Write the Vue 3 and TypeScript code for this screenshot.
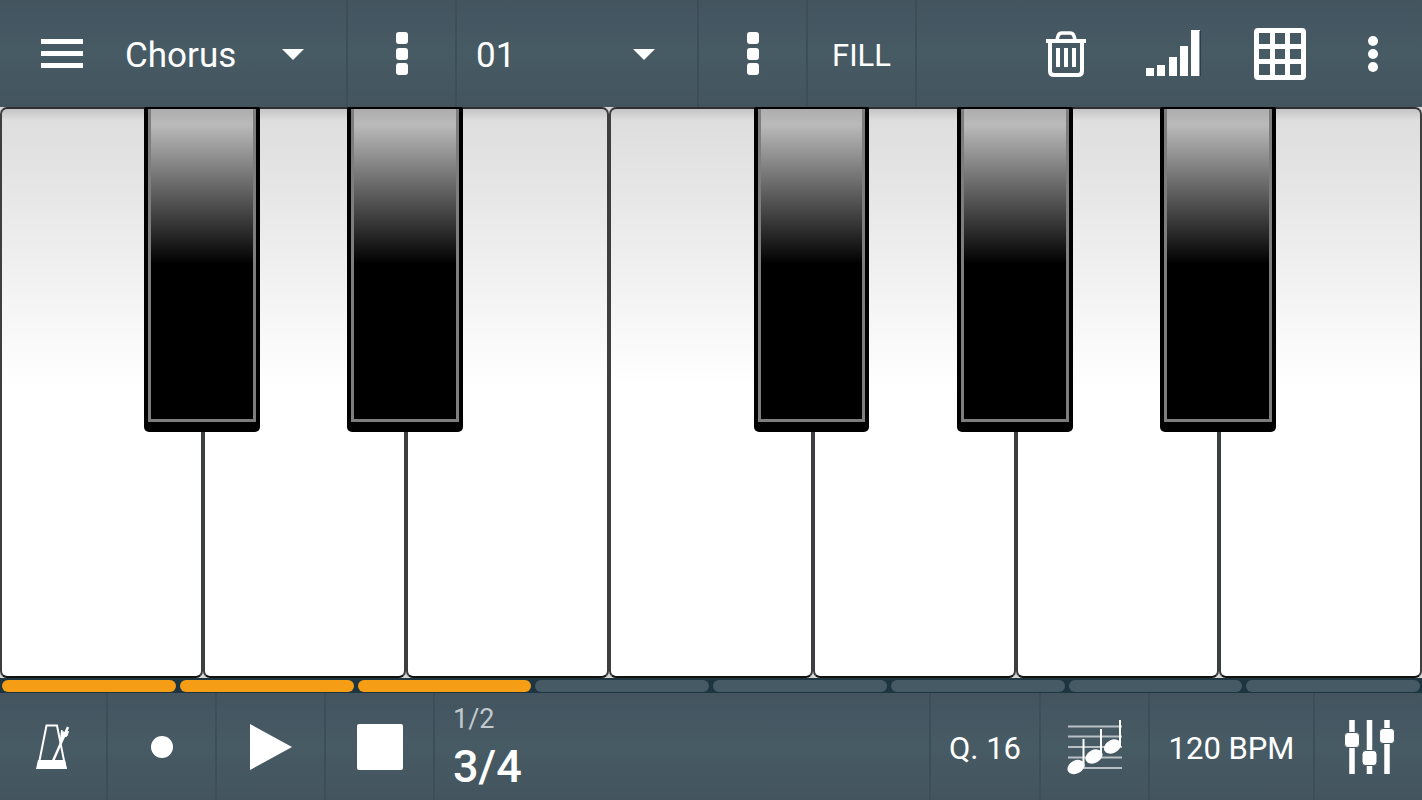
<script setup lang="ts">
import { ref } from 'vue'

interface PianoKey {
  note: string
  sharp?: string
}

const keys: PianoKey[] = [
  { note: 'C', sharp: 'C sharp' },
  { note: 'D', sharp: 'D sharp' },
  { note: 'E' },
  { note: 'F', sharp: 'F sharp' },
  { note: 'G', sharp: 'G sharp' },
  { note: 'A', sharp: 'A sharp' },
  { note: 'B' },
]

const totalSteps = 8
const currentStep = ref(3)
const section = ref('Chorus')
const pattern = ref('01')
</script>

<template>
  <div class="app">
    <header class="bar">
      <div class="cell section">
        <button class="menu" type="button" aria-label="Menu">
          <svg width="42" height="30" viewBox="0 0 42 30" fill="#fff">
            <rect width="42" height="5" /><rect y="12" width="42" height="5" /><rect y="24" width="42" height="5" />
          </svg>
        </button>
        <div class="picker">
          <select v-model="section" aria-label="Section">
            <option>Chorus</option>
          </select>
          <svg class="caret" width="22" height="12" viewBox="0 0 22 12"><path d="M0 1H22L11 12Z" fill="#fff" /></svg>
        </div>
      </div>
      <button class="cell" type="button" aria-label="Section options">
        <svg width="12" height="44" viewBox="0 0 12 44" fill="#fff">
          <rect width="12" height="12" rx="3" /><rect y="16" width="12" height="12" rx="3" /><rect y="31" width="12" height="12" rx="3" />
        </svg>
      </button>
      <div class="cell pattern">
        <div class="picker">
          <select v-model="pattern" aria-label="Pattern">
            <option>01</option>
          </select>
          <svg class="caret" width="22" height="12" viewBox="0 0 22 12"><path d="M0 1H22L11 12Z" fill="#fff" /></svg>
        </div>
      </div>
      <button class="cell" type="button" aria-label="Pattern options">
        <svg width="12" height="44" viewBox="0 0 12 44" fill="#fff">
          <rect width="12" height="12" rx="3" /><rect y="16" width="12" height="12" rx="3" /><rect y="31" width="12" height="12" rx="3" />
        </svg>
      </button>
      <button class="cell label" type="button">FILL</button>
      <div class="tools">
        <button class="tool" type="button" aria-label="Delete">
          <svg width="42" height="46" viewBox="0 0 42 46" fill="none" stroke="#fff">
            <path d="M1 10H41" stroke-width="4" />
            <path d="M12 9L13 5Q14 2 17 2H25Q28 2 29 5L30 9" stroke-width="3.5" />
            <path d="M5 11V40Q5 44 9 44H33Q37 44 37 40V11" stroke-width="4" />
            <path d="M13 17V36M21 17V36M29 17V36" stroke-width="4" />
          </svg>
        </button>
        <button class="tool" type="button" aria-label="Velocity">
          <svg width="56" height="48" viewBox="0 0 56 48" fill="#fff">
            <rect x="1" y="38" width="8" height="8" /><rect x="12" y="35" width="8" height="11" />
            <rect x="24" y="27" width="8" height="19" /><rect x="35" y="16" width="8" height="30" />
            <rect x="46" width="9" height="46" /><path d="M55 1V46" stroke="#10213f" stroke-width="1" />
          </svg>
        </button>
        <button class="tool" type="button" aria-label="Pads">
          <svg width="52" height="52" viewBox="0 0 52 52">
            <path
              fill="#fff"
              fill-rule="evenodd"
              d="M4 0H48Q52 0 52 4V48Q52 52 48 52H4Q0 52 0 48V4Q0 0 4 0ZM5 5V16H16V5ZM21 5V16H31V5ZM36 5V16H47V5ZM5 21V31H16V21ZM21 21V31H31V21ZM36 21V31H47V21ZM5 36V47H16V36ZM21 36V47H31V36ZM36 36V47H47V36Z"
            />
          </svg>
        </button>
        <button class="tool more" type="button" aria-label="More">
          <svg width="10" height="38" viewBox="0 0 10 38" fill="#fff">
            <circle cx="5" cy="6" r="5" /><circle cx="5" cy="19" r="5" /><circle cx="5" cy="32" r="5" />
          </svg>
        </button>
      </div>
    </header>

    <main class="keyboard">
      <div v-for="key in keys" :key="key.note" class="slot">
        <button class="white" type="button" :aria-label="key.note"></button>
        <button v-if="key.sharp" class="black" type="button" :aria-label="key.sharp"><span class="face"></span></button>
      </div>
    </main>

    <div class="steps">
      <span v-for="n in totalSteps" :key="n" class="step" :class="{ on: n <= currentStep }"></span>
    </div>

    <footer class="bar">
      <button class="cell" type="button" aria-label="Metronome">
        <svg width="36" height="56" viewBox="0 0 36 56" fill="none" stroke="#fff">
          <path d="M11.5 6.5H22L30.5 49H3Z" stroke-width="2" />
          <path d="M3 41H30L32 50H1Z" fill="#fff" stroke="none" />
          <path d="M18 42L33 8" stroke-width="2.5" />
          <path d="M26.5 11L29 13.5L33.5 12.5L32 17L29.5 18L25.5 21Z" fill="#fff" stroke-width="1" />
        </svg>
      </button>
      <button class="cell" type="button" aria-label="Record">
        <svg width="24" height="24" viewBox="0 0 24 24"><circle cx="12" cy="12" r="11" fill="#fff" /></svg>
      </button>
      <button class="cell" type="button" aria-label="Play">
        <svg width="42" height="46" viewBox="0 0 42 46"><path d="M0 0L42 23L0 46Z" fill="#fff" /></svg>
      </button>
      <button class="cell" type="button" aria-label="Stop">
        <svg width="46" height="46" viewBox="0 0 46 46"><rect width="46" height="46" rx="2" fill="#fff" /></svg>
      </button>
      <div class="cell position">
        <span class="measure">1/2</span>
        <strong class="beat">3/4</strong>
      </div>
      <button class="cell label quantize" type="button">Q. 16</button>
      <button class="cell" type="button" aria-label="Notes">
        <svg width="56" height="56" viewBox="0 0 56 56">
          <path d="M1 7.5H55M1 17.5H55M1 28H55M1 38.500H55M1 49H55" stroke="#b9c0c5" stroke-width="1.8" />
          <path d="M16.500 20V48M34 10V38M53 1V28" stroke="#fff" stroke-width="2" />
          <g fill="#fff">
            <ellipse cx="9" cy="48" rx="9" ry="6.5" transform="rotate(-28 9 48)" />
            <ellipse cx="27" cy="37.5" rx="9" ry="6.5" transform="rotate(-28 27 37.5)" />
            <ellipse cx="45.5" cy="27.5" rx="9" ry="6.5" transform="rotate(-28 45.5 27.5)" />
          </g>
        </svg>
      </button>
      <button class="cell label tempo" type="button">120 BPM</button>
      <button class="cell mixer" type="button" aria-label="Mixer">
        <svg width="56" height="56" viewBox="0 0 56 56">
          <path d="M11 1V55M28.5 1V55M46 1V55" stroke="#fff" stroke-width="5.5" />
          <g fill="#fff" stroke="#465962" stroke-width="1">
            <rect x="3.5" y="13.5" width="15" height="15" rx="3.5" />
            <rect x="21" y="31.5" width="15" height="15" rx="3.5" />
            <rect x="38.500" y="9.5" width="15" height="15" rx="3.5" />
          </g>
        </svg>
      </button>
    </footer>
  </div>
</template>

<style>
body {
  margin: 0;
}
</style>

<style scoped>
.app {
  display: flex;
  flex-direction: column;
  height: 100vh;
  background: #1d3541;
  color: #fff;
  font-family: Roboto, sans-serif;
}

button,
select {
  appearance: none;
  margin: 0;
  padding: 0;
  border: 0;
  background: none;
  color: inherit;
  font: inherit;
}

svg {
  display: block;
}

.bar {
  display: flex;
  flex: none;
  height: 107px;
  background: linear-gradient(#43545f, #475b65 50%, #43545e);
}

.cell {
  display: flex;
  flex: none;
  box-sizing: border-box;
  width: 109px;
  align-items: center;
  justify-content: center;
  border-right: 2px solid #3d4e58;
}

.section {
  width: 348px;
  justify-content: flex-start;
  padding-left: 41px;
}

.menu {
  margin-right: 42px;
}

.picker {
  position: relative;
  display: flex;
  flex: 1;
  align-items: center;
}

.picker select {
  width: 100%;
  height: 64px;
  padding-top: 4px;
  font-size: 35px;
}

.caret {
  position: absolute;
  right: 42px;
  pointer-events: none;
}

.pattern {
  width: 242px;
  padding-left: 19px;
}

.label {
  padding-top: 4px;
  font-size: 31px;
}

.tools {
  display: flex;
  flex: 1;
  justify-content: flex-end;
  padding-right: 9px;
}

.tool {
  display: flex;
  width: 107px;
  align-items: center;
  justify-content: center;
}

.more {
  width: 80px;
}

.keyboard {
  display: flex;
  flex: 1;
  min-height: 0;
  background: #d8d8d8;
}

.slot {
  position: relative;
  flex: 1;
}

.white {
  display: block;
  box-sizing: border-box;
  width: 100%;
  height: 100%;
  border: 2px solid #3c3e3f;
  border-top-color: #302f30;
  border-bottom-color: #111;
  border-radius: 7px;
  background: linear-gradient(#c4c4c4, #dedede 2%, #e6e6e6 14%, #fff 49%);
}

.black {
  position: absolute;
  z-index: 1;
  top: 0;
  right: -28%;
  box-sizing: border-box;
  width: 57%;
  height: 57%;
  padding: 2px 4px 10px;
  border-radius: 2px 2px 5px 5px;
  background: #000;
}

.face {
  display: block;
  box-sizing: border-box;
  height: 100%;
  border: 3px solid #7d7d7d;
  border-top: 0;
  background: linear-gradient(#adadad, #bababa 5%, #000 50%) padding-box;
}

.steps {
  display: flex;
  flex: none;
  box-sizing: border-box;
  height: 15px;
  gap: 4px;
  padding: 2px 2px 1px;
}

.step {
  flex: 1;
  border-radius: 6px;
  background: #465a65;
}

.step.on {
  background: #f59e15;
}

footer .cell:first-child {
  width: 108px;
}

.position {
  flex: 1;
  flex-direction: column;
  align-items: flex-start;
  justify-content: flex-start;
  padding: 10px 0 0 18px;
}

.measure {
  color: #c2c9cd;
  font-size: 27px;
  line-height: 32px;
}

.beat {
  font-size: 45px;
  font-weight: 500;
  line-height: 64px;
}

.quantize {
  width: 110px;
}

.tempo {
  width: 165px;
}

.mixer {
  width: 107px;
  border-right: 0;
}
</style>
